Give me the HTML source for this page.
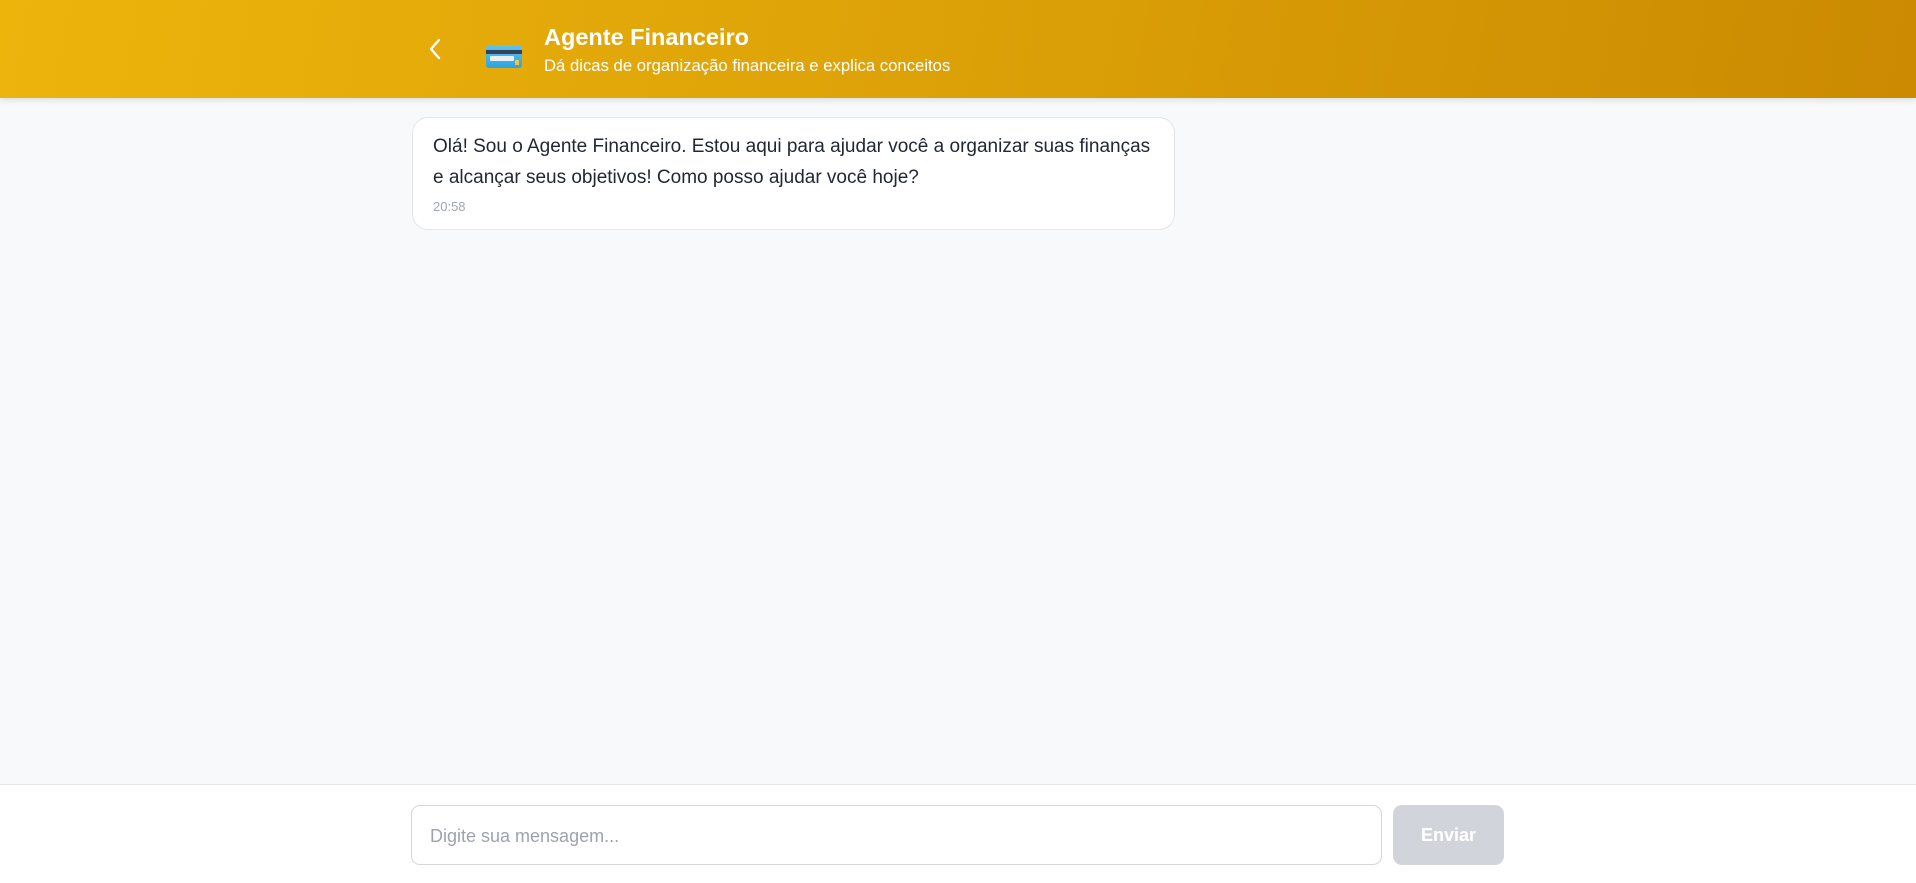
<!DOCTYPE html>
<html><head><meta charset="utf-8"><style>
*{box-sizing:border-box;margin:0;padding:0}
body{width:1916px;height:883px;overflow:hidden;background:#f8f9fb;font-family:"Liberation Sans",sans-serif;position:relative}
.hdr{position:absolute;left:0;top:0;width:1916px;height:98px;background:linear-gradient(100deg,#edb40c 0%,#dca107 50%,#cb8a02 100%);box-shadow:0 2px 6px rgba(0,0,0,.12)}
.back{position:absolute;left:426px;top:37px}
.card{position:absolute;left:486px;top:45px;width:36px;height:23px;border-radius:3px;background:linear-gradient(#5bc6f0,#2ea3e0)}
.card .s{position:absolute;left:0;top:5px;width:36px;height:4px;background:#3a3f5a}
.card .l{position:absolute;left:4px;top:11px;width:24px;height:5px;background:#e8eef3;border-radius:1px}
.card .c{position:absolute;left:29px;top:15px;width:4px;height:5px;background:#f5c43a}
.t1{position:absolute;left:544px;top:24px;color:#fff;font-weight:bold;font-size:23.5px}
.t2{position:absolute;left:544px;top:56px;color:#fff;font-size:16.7px}
.bub{position:absolute;left:412px;top:117px;width:763px;height:113px;background:#fff;border:1px solid #e3e5e8;border-radius:16px}
.msg{position:absolute;left:20px;top:13px;font-size:19px;line-height:31px;color:#222833;white-space:nowrap}
.tm{position:absolute;left:20px;top:81px;font-size:13px;color:#a0a6b0}
.ft{position:absolute;left:0;top:784px;width:1916px;height:99px;background:#fff;border-top:1px solid #e5e7eb}
.in{position:absolute;left:411px;top:20px;width:971px;height:60px;border:1px solid #d4d6db;border-radius:9px;font-size:18px;color:#9ca3af;padding:20px 0 0 18px}
.bt{position:absolute;left:1393px;top:20px;width:111px;height:60px;background:#d1d5db;border-radius:9px;color:#fff;font-weight:bold;font-size:18px;text-align:center;line-height:60px}
</style></head><body>
<div class="hdr">
<svg class="back" width="20" height="24" viewBox="0 0 20 24"><path d="M13 3 L5 12 L13 21" fill="none" stroke="#fff" stroke-width="2.4" stroke-linecap="round" stroke-linejoin="round"/></svg>
<div class="card"><div class="s"></div><div class="l"></div><div class="c"></div></div>
<div class="t1">Agente Financeiro</div>
<div class="t2">Dá dicas de organização financeira e explica conceitos</div>
</div>
<div class="bub"><div class="msg">Olá! Sou o Agente Financeiro. Estou aqui para ajudar você a organizar suas finanças<br>e alcançar seus objetivos! Como posso ajudar você hoje?</div><div class="tm">20:58</div></div>
<div class="ft"><div class="in">Digite sua mensagem...</div><div class="bt">Enviar</div></div>
</body></html>
